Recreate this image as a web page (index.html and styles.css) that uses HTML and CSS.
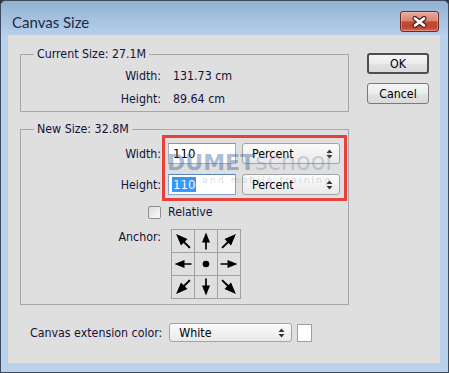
FILE: index.html
```html
<!DOCTYPE html>
<html>
<head>
<meta charset="utf-8">
<link rel="stylesheet" href="styles.css">
</head>
<body>
<div class="window">
  <div class="titlebar">
    <span class="title">Canvas Size</span>
    <div class="close">
      <svg width="15" height="12" viewBox="0 0 15 12"><path d="M3 2.5 12 9.5M12 2.5 3 9.5" stroke="#4b2019" stroke-width="5" stroke-linecap="round"/><path d="M3 2.5 12 9.5M12 2.5 3 9.5" stroke="#fff" stroke-width="2.8" stroke-linecap="round"/></svg>
    </div>
  </div>
  <div class="frame">
    <div class="client">
      <div class="top">
        <div class="groups">
          <fieldset class="group current">
            <legend>Current Size: 27.1M</legend>
            <div class="info">
              <span class="lbl">Width:</span><span>131.73 cm</span>
              <span class="lbl">Height:</span><span>89.64 cm</span>
            </div>
          </fieldset>
          <fieldset class="group newsize">
            <legend>New Size: 32.8M</legend>
            <div class="form">
              <span class="lbl">Width:</span>
              <div class="fields">
                <div class="input">110</div>
                <div class="select">Percent<svg class="spin" width="7" height="10" viewBox="0 0 7 10"><path d="M0.5 4 3.5 0.5 6.5 4zM0.5 6 3.5 9.5 6.5 6z" fill="#333"/></svg></div>
              </div>
              <span class="lbl">Height:</span>
              <div class="fields">
                <div class="input focus"><span class="hl">110</span></div>
                <div class="select">Percent<svg class="spin" width="7" height="10" viewBox="0 0 7 10"><path d="M0.5 4 3.5 0.5 6.5 4zM0.5 6 3.5 9.5 6.5 6z" fill="#333"/></svg></div>
              </div>
              <span class="checkbox"></span>
              <span class="check-label">Relative</span>
              <span class="lbl anchor-lbl">Anchor:</span>
              <div class="anchor">
                <div class="cell"><svg class="arr r-45" viewBox="0 0 22 22"><path d="M11 19.5V10" stroke="#000" stroke-width="1.7"/><path d="M11 2.5 7 12.5h8z"/></svg></div>
                <div class="cell"><svg class="arr" viewBox="0 0 22 22"><path d="M11 19.5V10" stroke="#000" stroke-width="1.7"/><path d="M11 2.5 7 12.5h8z"/></svg></div>
                <div class="cell"><svg class="arr r45" viewBox="0 0 22 22"><path d="M11 19.5V10" stroke="#000" stroke-width="1.7"/><path d="M11 2.5 7 12.5h8z"/></svg></div>
                <div class="cell"><svg class="arr r-90" viewBox="0 0 22 22"><path d="M11 19.5V10" stroke="#000" stroke-width="1.7"/><path d="M11 2.5 7 12.5h8z"/></svg></div>
                <div class="cell"><svg class="arr" viewBox="0 0 22 22"><circle cx="11" cy="11" r="3.3"/></svg></div>
                <div class="cell"><svg class="arr r90" viewBox="0 0 22 22"><path d="M11 19.5V10" stroke="#000" stroke-width="1.7"/><path d="M11 2.5 7 12.5h8z"/></svg></div>
                <div class="cell"><svg class="arr r-135" viewBox="0 0 22 22"><path d="M11 19.5V10" stroke="#000" stroke-width="1.7"/><path d="M11 2.5 7 12.5h8z"/></svg></div>
                <div class="cell"><svg class="arr r180" viewBox="0 0 22 22"><path d="M11 19.5V10" stroke="#000" stroke-width="1.7"/><path d="M11 2.5 7 12.5h8z"/></svg></div>
                <div class="cell"><svg class="arr r135" viewBox="0 0 22 22"><path d="M11 19.5V10" stroke="#000" stroke-width="1.7"/><path d="M11 2.5 7 12.5h8z"/></svg></div>
              </div>
              <div class="annot"></div>
              <div class="watermark">
                <div class="wm-main"><span class="wm-dumet">DUMET</span><span class="wm-school">school</span></div>
                <div class="wm-tag">web and mobile training</div>
              </div>
            </div>
          </fieldset>
        </div>
        <div class="buttons">
          <div class="btn default">OK</div>
          <div class="btn">Cancel</div>
        </div>
      </div>
      <div class="ext">
        <span class="ext-label">Canvas extension color:</span>
        <div class="select ext-select">White<svg class="spin" width="7" height="10" viewBox="0 0 7 10"><path d="M0.5 4 3.5 0.5 6.5 4zM0.5 6 3.5 9.5 6.5 6z" fill="#333"/></svg></div>
        <span class="swatch"></span>
      </div>
    </div>
  </div>
</div>
</body>
</html>
```
FILE: styles.css
```css
html, body {
  margin: 0;
  padding: 0;
  background: #2f3640;
}

.window {
  width: 449px;
  height: 373px;
  box-sizing: border-box;
  border: 1px solid #3d4b5c;
  border-radius: 6px 6px 0 0;
  background: #b9d1ea;
  display: flex;
  flex-direction: column;
  font-family: "DejaVu Sans Condensed", "Liberation Sans", sans-serif;
  font-size: 12.3px;
  color: #12123a;
  overflow: hidden;
}

.titlebar {
  height: 34px;
  flex: none;
  box-sizing: border-box;
  display: flex;
  align-items: flex-end;
  justify-content: space-between;
  padding: 0 9px 2px 11px;
  background: linear-gradient(#92b2d3, #b7cfe9);
}

.title {
  font-family: Lato, "Liberation Sans", sans-serif;
  font-size: 15px;
  line-height: 22px;
  color: #1b2b48;
}

.close {
  width: 39px;
  height: 21px;
  box-sizing: border-box;
  margin-bottom: 1px;
  border: 1px solid #6a2b22;
  border-radius: 3px;
  background: linear-gradient(#e9a99b 0%, #dc8673 45%, #c44a33 52%, #c14530 80%, #d5684f 100%);
  box-shadow: inset 0 0 0 1px rgba(255, 220, 210, 0.35);
  display: flex;
  align-items: center;
  justify-content: center;
}

.frame {
  flex: 1;
  display: flex;
  padding: 0 8px 9px 7px;
}

.client {
  flex: 1;
  background: #dfdfdf;
  padding: 12px 11px 0 12px;
  display: flex;
  flex-direction: column;
}

.top {
  display: flex;
  justify-content: space-between;
  align-items: flex-start;
}

.groups {
  width: 329px;
  display: flex;
  flex-direction: column;
  gap: 10px;
}

.group {
  margin: 0;
  min-width: 0;
  border: 1px solid #a7a7a7;
  padding: 0;
}

.group legend {
  margin-left: 13px;
  padding: 0 3px;
  line-height: 14px;
}

.current {
  padding: 4px 0 0 0;
}

.info {
  display: grid;
  grid-template-columns: 140px auto;
  column-gap: 12px;
  line-height: 23px;
}

.lbl {
  text-align: right;
}

.newsize {
  padding: 7px 0 5px 0;
}

.form {
  position: relative;
  display: grid;
  grid-template-columns: 140px auto;
  column-gap: 7px;
  row-gap: 10px;
  align-items: center;
}

.fields {
  display: flex;
  gap: 6px;
}

.input {
  width: 68px;
  height: 21px;
  box-sizing: border-box;
  border: 1px solid #abadb3;
  border-top-color: #8f939c;
  background: #fff;
  padding-left: 4px;
  line-height: 19px;
  font-size: 13px;
  color: #000;
}

.input.focus {
  border-color: #7ea4cf;
  border-top-color: #5b86b8;
}

.hl {
  background: #3399ff;
  color: #fff;
  padding: 0 1px;
  margin-left: -1px;
}

.select {
  width: 98px;
  height: 21px;
  box-sizing: border-box;
  border: 1px solid #a3a3a3;
  border-radius: 3px;
  background: linear-gradient(#fbfbfb, #e9e9e9);
  padding: 0 6px 0 9px;
  display: flex;
  align-items: center;
  justify-content: space-between;
  color: #000;
}

.checkbox {
  justify-self: end;
  width: 13px;
  height: 13px;
  box-sizing: border-box;
  border: 1px solid #8e8f8f;
  border-radius: 2px;
  background: linear-gradient(135deg, #dcdcdc, #fbfbfb);
}

.check-label {
  line-height: 14px;
}

.anchor-lbl {
  align-self: start;
  line-height: 16px;
}

.anchor {
  margin-left: 3px;
  width: 70px;
  box-sizing: border-box;
  display: grid;
  grid-template-columns: repeat(3, 22px);
  grid-template-rows: repeat(3, 22px);
  gap: 1px;
  padding: 1px;
  background: #a2a2a2;
}

.cell {
  background: #dfdfdf;
}

.arr {
  display: block;
  width: 22px;
  height: 22px;
}

.r45 { transform: rotate(45deg) scale(1.15); }
.r-45 { transform: rotate(-45deg) scale(1.15); }
.r135 { transform: rotate(135deg) scale(1.15); }
.r-135 { transform: rotate(-135deg) scale(1.15); }
.r90 { transform: rotate(90deg); }
.r-90 { transform: rotate(-90deg); }
.r180 { transform: rotate(180deg); }

.annot {
  position: absolute;
  grid-area: 1 / 2 / 3 / 3;
  top: -8px;
  left: -6px;
  bottom: -6px;
  width: 185px;
  box-sizing: border-box;
  border: 3px solid #e6423b;
  pointer-events: none;
}

.watermark {
  position: absolute;
  grid-area: 1 / 2 / 3 / 3;
  top: 7px;
  left: -1px;
  white-space: nowrap;
  pointer-events: none;
  font-family: "DejaVu Sans", sans-serif;
}

.wm-main {
  display: flex;
  align-items: baseline;
  line-height: 24px;
}

.wm-dumet {
  font-weight: bold;
  font-size: 22px;
  color: rgba(50, 95, 155, 0.42);
}

.wm-school {
  font-size: 24px;
  color: rgba(70, 105, 150, 0.26);
}

.wm-tag {
  margin-left: 5px;
  font-size: 9px;
  line-height: 10px;
  letter-spacing: 2.2px;
  color: rgba(70, 95, 130, 0.25);
}

.buttons {
  margin-top: 6px;
  display: flex;
  flex-direction: column;
  gap: 9px;
}

.btn {
  width: 62px;
  height: 21px;
  box-sizing: border-box;
  border: 1px solid #7a7a7a;
  border-radius: 3px;
  background: linear-gradient(#f5f5f5 0%, #ececec 50%, #e2e2e2 51%, #dadada 100%);
  display: flex;
  align-items: center;
  justify-content: center;
  color: #000;
}

.btn.default {
  border: 2px solid #4e4e4e;
}

.ext {
  margin-top: 18px;
  padding-left: 10px;
  display: flex;
  align-items: center;
}

.ext-label {
  margin-right: 7px;
}

.ext-select {
  width: 123px;
  height: 19px;
}

.swatch {
  margin-left: 5px;
  width: 15px;
  height: 18px;
  box-sizing: border-box;
  border: 1px solid #a0a0a0;
  background: #fff;
}
```
